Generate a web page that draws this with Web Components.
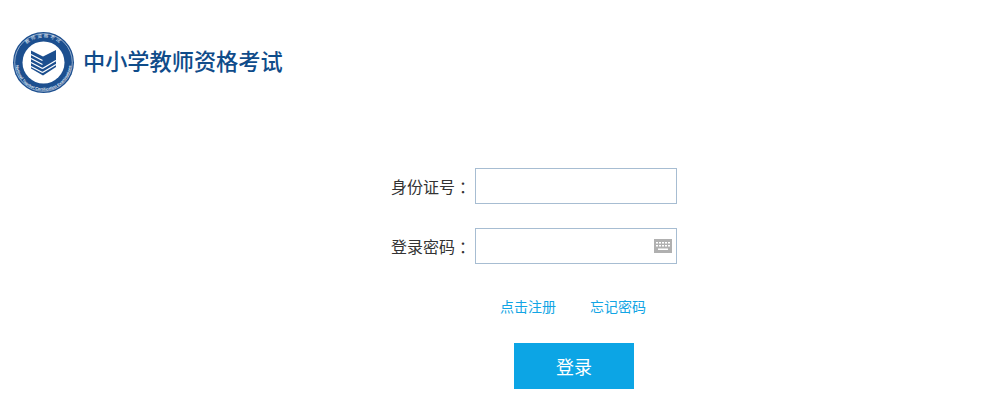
<!DOCTYPE html>
<html lang="zh-CN">
<head>
<meta charset="utf-8">
<title>中小学教师资格考试</title>
<style>
  html, body { margin: 0; background: #fff; }
  body { font-family: "Noto Sans CJK SC", "Liberation Sans", sans-serif; width: 983px; height: 410px; overflow: hidden; }
</style>
</head>
<body>
<site-header>中小学教师资格考试</site-header>
<login-form>
  <form-row label="身份证号"></form-row>
  <form-row label="登录密码" keyboard></form-row>
</login-form>

<template id="site-header-tpl">
  <style>
    :host { display: flex; align-items: center; height: 62px; padding: 31px 0 0 12px; gap: 8px; }
    svg { display: block; flex: none; }
    .title { font-size: 22.2px; font-weight: 500; line-height: 62px; margin-top: -4px; color: #0f4c8a; white-space: nowrap; }
  </style>
  <svg width="63" height="63" viewBox="0 0 63 63">
    <defs>
      <path id="arc-top" d="M6.5 31.5 A25 25 0 0 1 56.5 31.5"/>
      <path id="arc-bottom" d="M3.5 31.5 A28 28 0 0 0 59.5 31.5"/>
    </defs>
    <circle cx="31.5" cy="31.5" r="30.5" fill="#1c4f8f"/>
    <circle cx="31.5" cy="31.5" r="28.8" fill="none" stroke="#dfe8f2" stroke-width=".6"/>
    <circle cx="31.5" cy="31.5" r="21" fill="#fff"/>
    <text font-size="4.6" fill="#e4ecf5" letter-spacing="1.6" font-family="Noto Sans CJK SC, sans-serif"><textPath href="#arc-top" startOffset="50%" text-anchor="middle">教师资格考试</textPath></text>
    <text font-size="3.9" fill="#e4ecf5" font-family="Liberation Sans, sans-serif" font-weight="bold"><textPath href="#arc-bottom" startOffset="50%" text-anchor="middle">National Teacher Certification Examinations</textPath></text>
    <path d="M19 19.5 L31 25.5 L44 19 V36 L31 44.5 L19 37.5 Z" fill="#1c4f8f"/>
    <path d="M19 23.5 L30.5 29.5 M19 27.5 L30.5 33.5 M19 31.5 L30.5 37.5 M19 35.5 L30.5 41.5 M30.5 37.5 L44 29.5 M30.5 41.5 L44 33.5" stroke="#fff" stroke-width="1.4" fill="none"/>
  </svg>
  <div class="title"><slot></slot></div>
</template>

<template id="login-form-tpl">
  <style>
    :host { display: block; padding: 75px 0 0 375px; width: 302px; }
    .rows { display: flex; flex-direction: column; gap: 24px; }
    .links { display: flex; gap: 34px; padding: 32px 0 0 125px; font-size: 14px; line-height: 20px; }
    a { color: #12a5e4; text-decoration: none; white-space: nowrap; }
    .actions { padding: 27px 0 0 139px; }
    button {
      display: block; width: 120px; height: 46px; padding: 0; border: 0; background: #0ca5e5; color: #fff;
      font: 18px "Noto Sans CJK SC", sans-serif;
    }
  </style>
  <div class="rows"><slot></slot></div>
  <div class="links"><a href="#">点击注册</a><a href="#">忘记密码</a></div>
  <div class="actions"><button type="button">登录</button></div>
</template>

<template id="form-row-tpl">
  <style>
    :host { display: flex; align-items: center; height: 36px; }
    label { width: 100px; flex: none; padding-left: 16px; box-sizing: border-box; font-size: 16px; line-height: 36px; color: #333; white-space: nowrap; }
    .colon { margin-left: 4px; }
    .field { position: relative; width: 202px; height: 36px; box-sizing: border-box; border: 1px solid #a7bdd2; background: #fff; }
    input { display: block; width: 100%; height: 100%; box-sizing: border-box; border: 0; padding: 0 8px; background: transparent; outline: 0; }
    svg { position: absolute; top: 10px; right: 4px; display: none; }
    :host([keyboard]) svg { display: block; }
  </style>
  <label><span class="text"></span><span class="colon">：</span></label>
  <div class="field">
    <input type="text">
    <svg width="18" height="14" viewBox="0 0 18 14">
      <rect width="18" height="14" fill="#b0b0b0"/>
      <path d="M2 3h2v1.5H2zM5 3h2v1.5H5zM8 3h2v1.5H8zM11 3h2v1.5h-2zM14 3h2v1.5h-2zM2 6h2v1.5H2zM5 6h2v1.5H5zM8 6h2v1.5H8zM11 6h2v1.5h-2zM14 6h2v1.5h-2zM4 9.5h10V11H4z" fill="#fff"/>
    </svg>
  </div>
</template>

<script>
  function shadowFrom(el, id) {
    const shadow = el.attachShadow({mode: 'open'});
    shadow.appendChild(document.getElementById(id).content.cloneNode(true));
    return shadow;
  }

  class SiteHeader extends HTMLElement {
    constructor() {
      super();
      shadowFrom(this, 'site-header-tpl');
    }
  }
  customElements.define('site-header', SiteHeader);

  class LoginForm extends HTMLElement {
    constructor() {
      super();
      shadowFrom(this, 'login-form-tpl');
    }
  }
  customElements.define('login-form', LoginForm);

  class FormRow extends HTMLElement {
    constructor() {
      super();
      const shadow = shadowFrom(this, 'form-row-tpl');
      shadow.querySelector('.text').textContent = this.getAttribute('label');
    }
  }
  customElements.define('form-row', FormRow);
</script>
</body>
</html>
